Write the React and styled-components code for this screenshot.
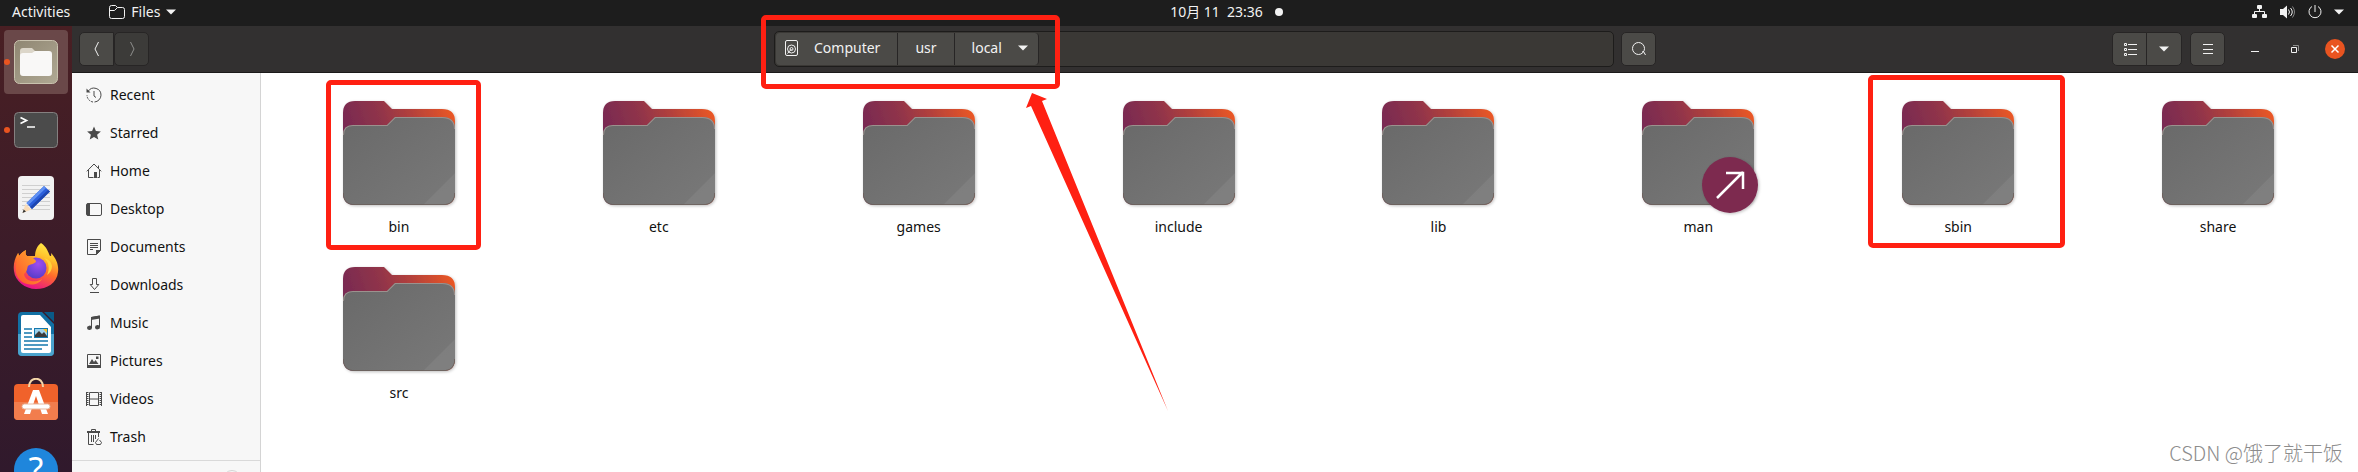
import React from 'react'
import styled, { createGlobalStyle } from 'styled-components'

const GlobalStyle = createGlobalStyle`
    * {
        box-sizing: border-box;
    }

    body {
        margin: 0;
        font-family: "Noto Sans", "Noto Sans CJK SC", sans-serif;
        font-size: 14px;
        line-height: 20px;
        color: #111111;
        background: #ffffff;
    }

    button {
        font: inherit;
        color: inherit;
        border: 0;
        padding: 0;
        background: none;
    }

    svg {
        display: block;
        flex: none;
    }
`;

const Screen = styled.div`
    position: relative;
    display: flex;
    flex-direction: column;
    height: 100vh;
    overflow: hidden;
`;

const TopBar = styled.header`
    display: grid;
    grid-template-columns: 1fr auto 1fr;
    align-items: center;
    flex: none;
    height: 26px;
    padding: 0 14px 2px 12px;
    color: #f2f2f2;
    background: #1d1d1d;
`;

const TopMenus = styled.div`
    display: flex;
    gap: 39px;
`;

const TopButton = styled.button`
    display: flex;
    align-items: center;
    gap: 6px;
`;

const Clock = styled.button`
    display: flex;
    align-items: center;
    gap: 12px;
    padding-left: 97px;
    white-space: pre;
`;

const Dot = styled.span`
    width: 8px;
    height: 8px;
    border-radius: 50%;
    background: #f2f2f2;
`;

const Tray = styled.button`
    display: flex;
    align-items: center;
    justify-self: end;
    gap: 12px;
`;

const Desktop = styled.div`
    display: flex;
    flex: 1;
    min-height: 0;
`;

const Dock = styled.nav`
    display: flex;
    flex-direction: column;
    flex: none;
    gap: 4px;
    width: 72px;
    padding: 4px;
    background: linear-gradient(#491f23, #3c1c29 50%, #30192c);
`;

const DockButton = styled.button`
    position: relative;
    display: flex;
    align-items: center;
    justify-content: center;
    flex: none;
    height: 64px;
    border-radius: 4px;
    background: ${({ $active }) => ($active ? '#6a4849' : 'none')};
`;

const Running = styled.span`
    position: absolute;
    left: 0;
    top: 29px;
    width: 6px;
    height: 6px;
    border-radius: 50%;
    background: #e95420;
`;

const Window = styled.main`
    display: flex;
    flex-direction: column;
    flex: 1;
    min-width: 0;
`;

const HeaderBar = styled.div`
    display: grid;
    grid-template-columns: 1fr minmax(0, 882px) 1fr;
    align-items: center;
    flex: none;
    height: 47px;
    padding: 0 13px 0 7px;
    color: #f2f2f2;
    background: #323030;
    border-bottom: 1px solid #1b1a1a;
`;

const ButtonGroup = styled.div`
    display: flex;
`;

const ToolButton = styled.button`
    display: flex;
    align-items: center;
    justify-content: center;
    width: 35px;
    height: 34px;
    border: 1px solid #272525;
    border-radius: 5px;
    background: ${({ $dim }) => ($dim ? '#3c3b39' : '#4b4a47')};

    ${ButtonGroup} > &:first-child:not(:last-child) {
        border-radius: 5px 0 0 5px;
    }

    ${ButtonGroup} > & + & {
        width: 36px;
        margin-left: -1px;
        border-radius: 0 5px 5px 0;
    }
`;

const PathGroup = styled.div`
    position: relative;
    display: flex;
    align-items: center;
    gap: 7px;
    padding-left: 3px;
    margin-right: -3px;
`;

const PathBar = styled.div`
    display: flex;
    flex: 1;
    height: 36px;
    padding: 1px;
    border: 1px solid #1d1c1b;
    border-radius: 5px;
    background: #3a3835;
`;

const PathButton = styled.button`
    display: flex;
    align-items: center;
    gap: 16px;
    padding: 0 17px 2px;
    padding-left: ${({ $root }) => ($root ? '9px' : '17px')};
    padding-right: ${({ $current }) => ($current ? '10px' : '17px')};
    border-right: 1px solid #272525;
    border-radius: ${({ $root, $current }) => ($root ? '4px 0 0 4px' : $current ? '0 4px 4px 0' : '0')};
    background: #4b4a47;
`;

const WindowTools = styled.div`
    display: flex;
    align-items: center;
    justify-self: end;
    gap: 8px;
`;

const WindowControls = styled.div`
    display: flex;
    gap: 20px;
    padding-left: 12px;
`;

const Control = styled.button`
    display: flex;
    align-items: center;
    justify-content: center;
    width: 20px;
    height: 20px;
    border-radius: 50%;
    background: ${({ $close }) => ($close ? '#e95420' : 'none')};
`;

const Content = styled.div`
    display: flex;
    flex: 1;
    min-height: 0;
`;

const Sidebar = styled.nav`
    flex: none;
    width: 189px;
    padding-top: 3px;
    overflow: hidden;
    background: #f7f7f7;
    border-right: 1px solid #d4d4d4;
`;

const Place = styled.a`
    display: flex;
    align-items: center;
    gap: 8px;
    height: 38px;
    padding: 0 14px;
    color: #111111;
    text-decoration: none;
`;

const Devices = styled.div`
    display: flex;
    justify-content: flex-end;
    margin-top: 4px;
    padding: 9px 19px;
    border-top: 1px solid #d9d9d9;
`;

const Eject = styled.button`
    width: 18px;
    height: 18px;
    border: 1px solid #d4d4d4;
    border-radius: 50%;
`;

const Files = styled.div`
    display: grid;
    grid-template-columns: repeat(8, 1fr);
    align-content: start;
    flex: 1;
    row-gap: 18px;
    padding: 16px 10px 16px 8px;
    background: #ffffff;
`;

const File = styled.div`
    position: relative;
    display: flex;
    flex-direction: column;
    align-items: center;
`;

const Mark = styled.span`
    position: absolute;
    left: ${({ $x }) => $x}px;
    top: ${({ $y }) => $y}px;
    width: ${({ $w }) => $w}px;
    height: ${({ $h }) => $h}px;
    border: 5px solid #ff2012;
    border-radius: 5px;
    pointer-events: none;
    z-index: 1;
`;

const Arrow = styled.svg`
    position: absolute;
    left: 254px;
    top: 62px;
    pointer-events: none;
    z-index: 1;
`;

const Watermark = styled.div`
    position: absolute;
    right: 15px;
    bottom: 5px;
    font-family: "Noto Sans CJK SC", sans-serif;
    font-size: 20px;
    font-weight: 300;
    line-height: 28px;
    color: #8c8c8c;
`;

const Caret = () => (
    <svg width="10" height="6" viewBox="0 0 10 6"><path d="M0 0.5h10L5 5.5z" fill="#f2f2f2" /></svg>
)

const Line = ({ children, size = 16, color = '#4a4a4a' }) => (
    <svg width={size} height={size} viewBox="0 0 16 16" fill="none" stroke={color}>{children}</svg>
)

const places = [
    {
        name: 'Recent',
        icon: <><path d="M2.2 4.2A7 7 0 0 1 15 8.2a7 7 0 0 1-6.5 6.800" /><path d="M7 15A7 7 0 0 1 1 8" strokeDasharray="2 1" /><path d="M.5 1.5v4h4z" fill="#4a4a4a" stroke="none" /><path d="M8 4v5l2 1.5" /></>,
    },
    {
        name: 'Starred',
        icon: <path d="M8 1.5l1.9 4.6 5 .4-3.8 3.2 1.2 4.8L8 11.9l-4.3 2.6 1.2-4.8L1.1 6.5l5-.4z" fill="#4a4a4a" stroke="none" />,
    },
    {
        name: 'Home',
        icon: <><path d="M.8 8.3L8 1l7.2 7.3M2.5 7v7.5h5M13.5 7v7.5h-2M12.5 2.5v3" /><path d="M8 9h3v6H8z" fill="#4a4a4a" stroke="none" /></>,
    },
    {
        name: 'Desktop',
        icon: <><rect x=".5" y="2.5" width="15" height="12" rx="1.5" /><path d="M1 2.5h3v12H1z" fill="#4a4a4a" stroke="none" /></>,
    },
    {
        name: 'Documents',
        icon: <><path d="M1.5.5h13v11l-4 4h-9z" /><path d="M4 4.5h8M4 6.5h8M4 8.5h8M4 10.5h3" /><path d="M10 16v-5h5z" fill="#4a4a4a" stroke="none" /></>,
    },
    {
        name: 'Downloads',
        icon: <><path d="M6.5 1.5h4v6h2.3l-4.3 5-4.3-5h2.3zM4 15.5h9" /></>,
    },
    {
        name: 'Music',
        icon: <><path d="M5.5 13V2.5l8-1.5v11" /><path d="M5 2l9-1.5v3L5 5zM1 13a2.3 2 0 1 0 5-.4A2.3 2 0 1 0 1 13zM9 12.4a2.3 2 0 1 0 5-.4 2.3 2 0 1 0-5 .4z" fill="#4a4a4a" stroke="none" /></>,
    },
    {
        name: 'Pictures',
        icon: <><path d="M1.5 1.5h13v12h-13z" /><path d="M1 12h14v3H1zM3 11l3-5 2 3 1.5-2 3 4zM10 3.5h2.5V6H10z" fill="#4a4a4a" stroke="none" /></>,
    },
    {
        name: 'Videos',
        icon: <><path d="M3.5 1.5h9v13h-9zM3.5 8h9" /><path d="M1.5 1v14M14.5 1v14" strokeWidth="2" strokeDasharray="1 1" /><path d="M.5 1v14M15.5 1v14" /></>,
    },
    {
        name: 'Trash',
        icon: <><path d="M5.5 2V.5h4V2" /><path d="M1 2h13v2H1z" fill="#4a4a4a" stroke="none" /><path d="M2.5 4v11.5h5M12.5 4v4M5.5 6v7M7.5 6v7M9.5 6v4" /><path d="M12.5 9.5l-3 4 1 2h4l1-2-2-2.5" /></>,
    },
]

const FilesIcon = () => (
    <svg width="44" height="44" viewBox="0 0 44 44">
        <defs>
            <linearGradient id="filesTile" x1="0" y1="0" x2="1" y2="1">
                <stop offset="0" stopColor="#8f8672" />
                <stop offset="1" stopColor="#b0a994" />
            </linearGradient>
        </defs>
        <rect x=".5" y=".5" width="43" height="43" rx="5" fill="url(#filesTile)" stroke="#c9c2ae" />
        <path d="M6 11a3 3 0 0 1 3-3h9l3 3h12v10H6z" fill="#dcd6c9" />
        <path d="M6 16a3 3 0 0 1 3-3h9l3-2h14a3 3 0 0 1 3 3v19a3 3 0 0 1-3 3H9a3 3 0 0 1-3-3z" fill="#f9f8f7" />
    </svg>
)

const TerminalIcon = () => (
    <svg width="44" height="36" viewBox="0 0 44 36" fill="none">
        <rect x=".5" y=".5" width="43" height="35" rx="4" fill="#4b4b4b" stroke="#858080" />
        <path d="M6.5 5.5l6 3-6 3M13 15h8" stroke="#ffffff" strokeWidth="1.7" />
    </svg>
)

const EditorIcon = () => (
    <svg width="36" height="44" viewBox="0 0 36 44">
        <rect width="36" height="44" rx="4" fill="#f2f2f2" />
        <path d="M4 9.5h28M4 13.5h28M4 17.5h28M4 21.5h28M4 25.5h28M4 29.5h28M4 33.5h28" stroke="#cfcfcf" />
        <path d="M4.5 37l3-9 6 5.500z" fill="#f9dcb8" />
        <path d="M4.5 37l1.200-3.500 2.300 2z" fill="#333333" />
        <path d="M8.5 27L26 10l6 5.500L14 33z" fill="#2b5fdc" />
        <path d="M8.5 27L26 10l2 2-17.500 17z" fill="#5f90f2" />
        <path d="M12 31l18-17 2 1.500L14 33z" fill="#1d46b0" />
    </svg>
)

const FirefoxIcon = () => (
    <svg width="46" height="46" viewBox="0 0 46 46">
        <defs>
            <linearGradient id="foxBody" x1=".8" y1="0" x2=".4" y2="1">
                <stop offset="0" stopColor="#fff14a" />
                <stop offset=".3" stopColor="#ffc22c" />
                <stop offset=".6" stopColor="#ff6a2b" />
                <stop offset="1" stopColor="#e8118a" />
            </linearGradient>
            <radialGradient id="foxGlobe" cx=".6" cy=".3" r=".8">
                <stop offset="0" stopColor="#a04df0" />
                <stop offset="1" stopColor="#4f3bc4" />
            </radialGradient>
            <linearGradient id="foxHead" x1="0" y1="1" x2="1" y2="0">
                <stop offset="0" stopColor="#ff5030" />
                <stop offset="1" stopColor="#ffb52a" />
            </linearGradient>
        </defs>
        <path d="M28 0c6 4 7 9 9 13 2 0 1-2 1-3 5 5 8 12 7 19-1 11-11 17-22 17S2 38 1 28c-1-7 1-13 4-18 0 0 1 0 1 3 2-3 5-5 7-6-1 3 0 5 1 6h8c0-5 2-10 6-13z" fill="url(#foxBody)" />
        <circle cx="23" cy="25" r="10.5" fill="url(#foxGlobe)" />
        <path d="M6 13c2-3 5-5 7-6-1 3 0 5 1 6 4 0 7 2 9 5 0 3-6 3-8 5-1 1 0 5-4 8 1 8 12 9 18 5-5 9-23 7-26-6-1-7 1-14 3-17z" fill="url(#foxHead)" />
        <path d="M31 15c5 4 6 11 3 17 3-2 5-5 5-9-1-5-4-7-8-8z" fill="#ffd338" />
    </svg>
)

const WriterIcon = () => (
    <svg width="36" height="44" viewBox="0 0 36 44">
        <path d="M4 0h20l12 12v28a4 4 0 0 1-4 4H4a4 4 0 0 1-4-4V4a4 4 0 0 1 4-4z" fill="#1270a4" />
        <path d="M0 22h36v18a4 4 0 0 1-4 4H4a4 4 0 0 1-4-4z" fill="#4ba3cd" />
        <path d="M26 0h10v10z" fill="#0a5a87" />
        <path d="M5 3h17l11 12v24a2 2 0 0 1-2 2H5a2 2 0 0 1-2-2V5a2 2 0 0 1 2-2z" fill="#ffffff" />
        <path d="M6 17h8M6 21h8M6 25h8M6 29h24M6 33h24M6 37h18" stroke="#1478ad" strokeWidth="1.6" />
        <path d="M16 16h14v10H16z" fill="#1478ad" />
        <path d="M17 17h12v8H17z" fill="#9fd3ee" />
        <path d="M17 25v-2l4-4 3 3 2-2 3 4v1z" fill="#3b3b3b" />
        <path d="M25 17h4v4z" fill="#f6c026" />
    </svg>
)

const SoftwareIcon = () => (
    <svg width="44" height="48" viewBox="0 1 44 48" fill="none">
        <rect y="7" width="44" height="36" rx="4" fill="#f0622b" />
        <path d="M0 25h44v14a4 4 0 0 1-4 4H4a4 4 0 0 1-4-4z" fill="#f27d4d" />
        <path d="M15 10c0-11 14-11 14 0" stroke="#f3d6a8" strokeWidth="2" />
        <path d="M19 13h6l9 24h-6l-6-18-6 18h-6z" fill="#ffffff" />
        <rect x="8" y="27" width="28" height="5" rx="2.5" fill="#ffffff" stroke="#e7b79f" />
    </svg>
)

const HelpIcon = () => (
    <svg width="44" height="44" viewBox="0 0 44 44">
        <circle cx="22" cy="22" r="22" fill="#1f86dc" />
        <text x="22" y="34" textAnchor="middle" fontSize="34" fontFamily="Noto Sans, sans-serif" fill="#ffffff">?</text>
    </svg>
)

const dock = [
    { name: 'Files', icon: <FilesIcon />, active: true, running: true },
    { name: 'Terminal', icon: <TerminalIcon />, running: true },
    { name: 'Text Editor', icon: <EditorIcon /> },
    { name: 'Firefox', icon: <FirefoxIcon /> },
    { name: 'LibreOffice Writer', icon: <WriterIcon /> },
    { name: 'Ubuntu Software', icon: <SoftwareIcon /> },
    { name: 'Help', icon: <HelpIcon /> },
]

const files = [
    { name: 'bin', mark: { $x: 57, $y: -9, $w: 155, $h: 170 } },
    { name: 'etc' },
    { name: 'games' },
    { name: 'include' },
    { name: 'lib' },
    { name: 'man', link: true },
    { name: 'sbin', mark: { $x: 40, $y: -14, $w: 197, $h: 173 } },
    { name: 'share' },
    { name: 'src' },
]

const FolderGradients = () => (
    <svg width="0" height="0" style={{ position: 'absolute' }} aria-hidden="true">
        <defs>
            <linearGradient id="folderBack" x1="0" y1=".3" x2="1" y2="0">
                <stop offset="0" stopColor="#772953" />
                <stop offset=".35" stopColor="#90344a" />
                <stop offset=".6" stopColor="#b2403c" />
                <stop offset="1" stopColor="#f15a22" />
            </linearGradient>
            <linearGradient id="folderFront" x1="0" y1="0" x2="1" y2="1">
                <stop offset="0" stopColor="#696969" />
                <stop offset="1" stopColor="#797979" />
            </linearGradient>
            <clipPath id="folderClip">
                <path d="M8 46q0-10 10-10h34l8-8h47q13 0 13 12v64q0 12-12 12H20q-12 0-12-12z" />
            </clipPath>
            <filter id="folderShadow" x="-10%" y="-10%" width="125%" height="125%">
                <feDropShadow dx="1" dy="1" stdDeviation="1.5" floodOpacity=".25" />
            </filter>
        </defs>
    </svg>
)

const Folder = ({ link }) => (
    <svg width="128" height="128" viewBox="0 0 128 128" overflow="visible">
        <path d="M8 24q0-12 12-12h29l8 8h50q13 0 13 12v72q0 12-12 12H20q-12 0-12-12z" fill="url(#folderBack)" filter="url(#folderShadow)" />
        <g clipPath="url(#folderClip)">
            <path d="M8 28h112v88H8z" fill="url(#folderFront)" />
            <path d="M120 84v32H88z" fill="#ffffff" opacity=".06" />
            <path d="M8 46q0-10 10-10h34l8-8h47q13 0 13 12" fill="none" stroke="#9b928e" strokeWidth="2" />
            <path d="M8 104q0 12 12 12h88q12 0 12-12" fill="none" stroke="#6b5f5a" strokeWidth="1.5" />
        </g>
        {link && (
            <g>
                <circle cx="96" cy="96" r="28" fill="#7d2a50" filter="url(#folderShadow)" />
                <path d="M83 109l26-26M92 84h17v16" fill="none" stroke="#ffffff" strokeWidth="2.5" />
            </g>
        )}
    </svg>
)

const App = () => {
    return (
        <Screen>
            <GlobalStyle />
            <FolderGradients />
            <TopBar>
                <TopMenus>
                    <TopButton>Activities</TopButton>
                    <TopButton>
                        <Line color="#f2f2f2"><path d="M.5 12.5v-9q0-2 2-2h4l2 2h5q2 0 2 2v7q0 2-2 2h-11q-2 0-2-2zM.5 6.5h5l3-3" /></Line>
                        Files
                        <Caret />
                    </TopButton>
                </TopMenus>
                <Clock>{'10月 11  23:36'}<Dot /></Clock>
                <Tray aria-label="System menu">
                    <svg width="16" height="14" viewBox="0 0 16 14" fill="#f2f2f2">
                        <rect x="5" width="5" height="4" rx="1" />
                        <rect y="9" width="5" height="4" rx="1" />
                        <rect x="10" y="9" width="5" height="4" rx="1" />
                        <path d="M7.5 4v2.500M2.5 9V6.5h10V9" fill="none" stroke="#f2f2f2" />
                    </svg>
                    <svg width="16" height="14" viewBox="0 0 16 14" fill="none" stroke="#f2f2f2">
                        <path d="M0 4h3l4-3.500v13L3 10H0z" fill="#f2f2f2" stroke="none" />
                        <path d="M8.5 4.5q2 2.500 0 5" />
                        <path d="M10.5 3q3.500 4 0 8" />
                        <path d="M12.5 1.5q4 5.500 0 11" opacity=".5" />
                    </svg>
                    <svg width="14" height="14" viewBox="0 0 14 14" fill="none" stroke="#f2f2f2">
                        <path d="M4 1.5a6 6 0 1 0 6 0M7 0v7" />
                    </svg>
                    <Caret />
                </Tray>
            </TopBar>
            <Desktop>
                <Dock>
                    {dock.map((app) => (
                        <DockButton key={app.name} aria-label={app.name} $active={app.active}>
                            {app.running && <Running />}
                            {app.icon}
                        </DockButton>
                    ))}
                </Dock>
                <Window>
                    <HeaderBar>
                        <ButtonGroup>
                            <ToolButton aria-label="Back">
                                <Line color="#f2f2f2"><path d="M9.5 1L6 8l3.500 7" /></Line>
                            </ToolButton>
                            <ToolButton aria-label="Forward" $dim>
                                <Line color="#8f8f8d"><path d="M6.5 1L10 8l-3.500 7" /></Line>
                            </ToolButton>
                        </ButtonGroup>
                        <PathGroup>
                            <PathBar>
                                <PathButton $root>
                                    <svg width="13" height="16" viewBox="0 0 13 16" fill="none" stroke="#f2f2f2">
                                        <rect x=".5" y=".5" width="12" height="15" rx="1.5" />
                                        <circle cx="6.5" cy="9" r="4" />
                                        <circle cx="6.5" cy="9" r="1.5" />
                                        <path d="M2.5 13.5l4-4.500" />
                                    </svg>
                                    Computer
                                </PathButton>
                                <PathButton>usr</PathButton>
                                <PathButton $current>local <Caret /></PathButton>
                            </PathBar>
                            <ToolButton aria-label="Search">
                                <Line color="#f2f2f2"><circle cx="7.5" cy="7.5" r="6" /><path d="M11 11l1.500-.5 2 3.500" /></Line>
                            </ToolButton>
                            <Mark $x={-10} $y={-16} $w={299} $h={74} />
                            <Arrow width="144" height="320" viewBox="0 0 144 320">
                                <path d="M7 0l15 6-5 2 126 310L6 13l-5 2z" fill="#ff2012" />
                            </Arrow>
                        </PathGroup>
                        <WindowTools>
                            <ButtonGroup>
                                <ToolButton aria-label="List view">
                                    <Line color="#f2f2f2"><path d="M2.5 2.5h2v2h-2zM2.5 7.5h2v2h-2zM2.5 12.5h2v2h-2zM6 3.5h9M6 8.5h9M6 13.5h9" /></Line>
                                </ToolButton>
                                <ToolButton aria-label="View options"><Caret /></ToolButton>
                            </ButtonGroup>
                            <ToolButton aria-label="Menu">
                                <Line color="#f2f2f2"><path d="M3 3.5h10M3 8.5h10M3 12.5h10" /></Line>
                            </ToolButton>
                            <WindowControls>
                                <Control aria-label="Minimize">
                                    <Line color="#f2f2f2"><path d="M4 10.5h8" /></Line>
                                </Control>
                                <Control aria-label="Restore">
                                    <Line color="#f2f2f2"><path d="M4.5 6.5h5v5h-5z" /><path d="M6 4.5h5.500V10" stroke="#8f8f8d" /></Line>
                                </Control>
                                <Control aria-label="Close" $close>
                                    <Line color="#ffffff"><path d="M4.5 4.5l7 7M11.5 4.5l-7 7" strokeWidth="1.5" /></Line>
                                </Control>
                            </WindowControls>
                        </WindowTools>
                    </HeaderBar>
                    <Content>
                        <Sidebar>
                            {places.map((place) => (
                                <Place key={place.name} href="#">
                                    <Line>{place.icon}</Line>
                                    {place.name}
                                </Place>
                            ))}
                            <Devices>
                                <Eject aria-label="Eject" />
                            </Devices>
                        </Sidebar>
                        <Files>
                            {files.map((file) => (
                                <File key={file.name}>
                                    <Folder link={file.link} />
                                    {file.name}
                                    {file.mark && <Mark {...file.mark} />}
                                </File>
                            ))}
                        </Files>
                    </Content>
                </Window>
            </Desktop>
            <Watermark>CSDN @饿了就干饭</Watermark>
        </Screen>
    )
}

export default App
